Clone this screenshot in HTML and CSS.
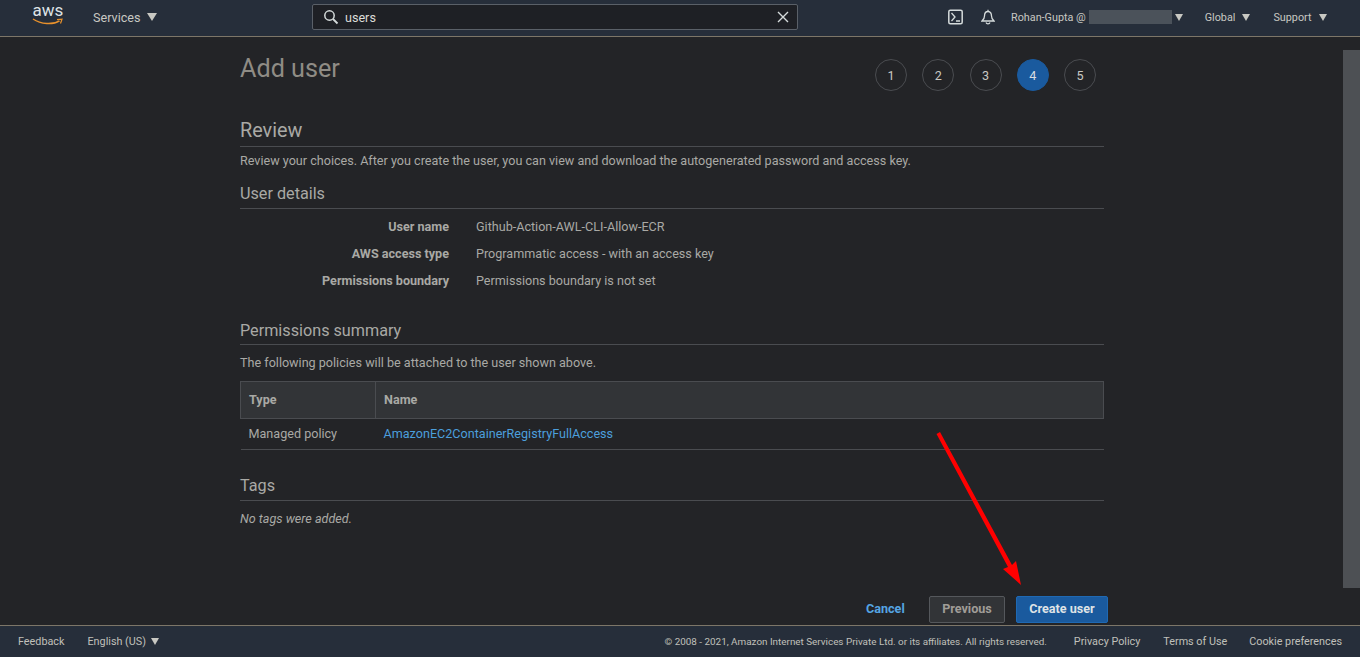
FILE: index.html
```html
<!DOCTYPE html>
<html lang="en">
<head>
<meta charset="utf-8">
<title>Add user</title>
<link rel="stylesheet" href="styles.css">
</head>
<body>
<header class="topbar">
  <div class="logo">
    <span class="logo-text">aws</span>
    <svg class="smile" width="32" height="8" viewBox="0 0 32 8"><path d="M1 1C9 6.500 21 7 27.500 2.800" fill="none" stroke="#e8912c" stroke-width="1.500"/><path d="M25 1.700L30 1.200L28.500 5.500" fill="none" stroke="#e8912c" stroke-width="1.200"/></svg>
  </div>
  <span class="nav services">Services <i class="caret caret-lg"></i></span>
  <div class="search">
    <svg width="16" height="16" viewBox="0 0 16 16" class="search-icon"><circle cx="6.500" cy="6.500" r="4.700" fill="none" stroke="#d5dbdb" stroke-width="1.500"/><path d="M10 10L14.500 14.500" stroke="#d5dbdb" stroke-width="1.800"/></svg>
    <span class="search-text">users</span>
    <svg width="14" height="14" viewBox="0 0 14 14" class="search-x"><path d="M2 2L12 12M12 2L2 12" stroke="#d5dbdb" stroke-width="1.400"/></svg>
  </div>
  <div class="top-right">
    <svg class="ico-term" width="15" height="16" viewBox="0 0 15 16"><rect x="0.800" y="1.300" width="13.400" height="13.400" rx="1.500" fill="none" stroke="#d5dbdb" stroke-width="1.500"/><path d="M3.500 4L7 8L3.500 12M8 12H12" fill="none" stroke="#d5dbdb" stroke-width="1.300"/></svg>
    <svg class="ico-bell" width="14" height="16" viewBox="0 0 14 16"><path d="M7 2.500C4.300 2.500 3.500 4.500 3.500 7C3.500 9.500 2.800 10.500 1 12H13C11.200 10.500 10.500 9.500 10.500 7C10.500 4.500 9.700 2.500 7 2.500ZM7 0.800V2.500" fill="none" stroke="#d5dbdb" stroke-width="1.300"/><path d="M5 13.500C5.500 15.300 8.500 15.300 9 13.500" fill="none" stroke="#d5dbdb" stroke-width="1.200"/></svg>
    <span class="nav small account">Rohan-Gupta @<span class="redact"></span><i class="caret"></i></span>
    <span class="nav small global">Global <i class="caret"></i></span>
    <span class="nav small support">Support <i class="caret"></i></span>
  </div>
</header>

<div class="body-row">
  <main class="content">
    <div class="column">
      <div class="title-row">
        <h1>Add user</h1>
        <ol class="steps">
          <li>1</li><li>2</li><li>3</li><li class="active">4</li><li>5</li>
        </ol>
      </div>
      <h2 class="review">Review</h2>
      <p class="lead">Review your choices. After you create the user, you can view and download the autogenerated password and access key.</p>
      <h3 class="details">User details</h3>
      <dl class="details-list">
        <div><dt>User name</dt><dd>Github-Action-AWL-CLI-Allow-ECR</dd></div>
        <div><dt>AWS access type</dt><dd>Programmatic access - with an access key</dd></div>
        <div><dt>Permissions boundary</dt><dd>Permissions boundary is not set</dd></div>
      </dl>
      <h3 class="perm">Permissions summary</h3>
      <p class="lead">The following policies will be attached to the user shown above.</p>
      <table class="policy">
        <thead><tr><th class="col-type">Type</th><th>Name</th></tr></thead>
        <tbody><tr><td>Managed policy</td><td><a href="#">AmazonEC2ContainerRegistryFullAccess</a></td></tr></tbody>
      </table>
      <h3 class="tags">Tags</h3>
      <p class="lead none">No tags were added.</p>
    </div>
  </main>
  <div class="scroll"><div class="thumb"></div></div>
</div>

<div class="actions">
  <a href="#" class="cancel">Cancel</a>
  <button class="btn prev">Previous</button>
  <button class="btn create">Create user</button>
</div>

<footer class="footer">
  <span class="f-feedback">Feedback</span>
  <span class="f-lang">English (US) <i class="caret"></i></span>
  <span class="copy">© 2008 - 2021, Amazon Internet Services Private Ltd. or its affiliates. All rights reserved.</span>
  <span class="f-link">Privacy Policy</span>
  <span class="f-link terms">Terms of Use</span>
  <span class="f-link">Cookie preferences</span>
</footer>

<svg class="arrow" width="100" height="170" viewBox="0 0 100 170"><path d="M0.500 2L4 0L76 133L80 129L85 153L67 137L72 135Z" fill="#ff0000"/></svg>
</body>
</html>
```
FILE: styles.css
```css
* { box-sizing: border-box; }
html, body { height: 100%; }
body {
  margin: 0;
  height: 657px;
  overflow: hidden;
  display: flex;
  flex-direction: column;
  background: #232427;
  color: #a9a9a5;
  font-family: Roboto, "Liberation Sans", sans-serif;
  font-size: 12.6px;
  position: relative;
}
.topbar {
  height: 37px;
  flex: none;
  background: #262e3a;
  border-bottom: 1px solid #7d7668;
  display: flex;
  align-items: center;
  padding: 0 0 2px 32px;
  color: #c8c8c2;
}
.logo { flex: none; width: 32px; display: flex; flex-direction: column; align-items: center; }
.logo-text { font-size: 17px; line-height: 13px; height: 13px; color: #dfe3e6; margin-top: -4px; }
.smile { display: block; margin-top: 1px; }
.nav { display: inline-flex; align-items: center; white-space: nowrap; }
.services { margin-left: 29px; font-size: 12.6px; gap: 7px; width: 219px; }
.caret {
  display: inline-block;
  width: 0; height: 0;
  border-left: 4.500px solid transparent;
  border-right: 4.500px solid transparent;
  border-top: 7px solid #c8c8c2;
}
.caret-lg { border-left-width: 5px; border-right-width: 5px; border-top-width: 8px; }
.search {
  width: 486px;
  height: 26px;
  background: #1e2025;
  border: 1px solid #5a6068;
  border-radius: 2px;
  display: flex;
  align-items: center;
  padding: 0 7px 0 10px;
  color: #dcdcd8;
  font-size: 12.6px;
}
.search-icon { flex: none; }
.search-text { margin-left: 6px; flex: 1; }
.search-x { flex: none; }
.top-right { display: flex; align-items: center; margin-left: 150px; }
.small { font-size: 10.8px; }
.ico-term { flex: none; }
.ico-bell { flex: none; margin-left: 18px; }
.account { margin-left: 16px; }
.redact { display: inline-block; width: 83px; height: 14px; margin-left: 3px; background: #4b525a; }
.account .caret { margin-left: 3px; border-left-width: 4px; border-right-width: 4px; }
.global { margin-left: 22px; gap: 7px; }
.support { margin-left: 23px; gap: 7px; }

.body-row { flex: 1; min-height: 0; display: flex; }
.content { flex: 1; min-width: 0; padding-left: 240px; }
.column { width: 864px; }
.scroll { width: 17px; flex: none; padding-top: 13px; }
.thumb { height: 100%; background: #4d5054; }

.title-row { display: flex; justify-content: space-between; height: 75px; padding-top: 16px; }
h1 { margin: 1px 0 0; font-size: 25.2px; font-weight: 400; color: #8f8c85; line-height: 30px; }
.steps { list-style: none; display: flex; gap: 15.25px; margin: 6px 8px 0 0; padding: 0; }
.steps li {
  width: 32px; height: 32px;
  border: 1px solid #4a4c50;
  border-radius: 50%;
  display: flex; align-items: center; justify-content: center;
  color: #c8c8c2;
  font-size: 12.6px;
}
.steps li.active { background: #1a5a9e; border-color: #1a5a9e; color: #d8dde2; }
h2, h3 { margin: 0; font-weight: 400; color: #a9a9a5; border-bottom: 1px solid #4a4c50; }
.review { font-size: 19.8px; line-height: 24px; height: 35px; padding-top: 7px; }
.lead { margin: 0; line-height: 16px; color: #a9a9a5; }
.review + .lead { margin-top: 6px; }
.details { font-size: 16.2px; line-height: 20px; height: 28px; margin-top: 12px; padding-top: 3px; }
.details-list { margin: 4px 0 0; }
.details-list div { display: flex; height: 27px; align-items: center; }
dt { width: 209px; text-align: right; font-weight: 700; color: #a9a9a5; }
dd { margin: 0 0 0 27px; }
.perm { font-size: 16.2px; line-height: 20px; height: 28px; margin-top: 23px; padding-top: 4px; }
.perm + .lead { margin-top: 10px; }
.policy { width: 864px; border-collapse: collapse; margin-top: 10px; table-layout: fixed; }
.policy th {
  height: 37px;
  background: #323437;
  border: 1px solid #4a4c50;
  text-align: left;
  padding: 0 8px 2px;
  font-weight: 700;
  color: #a9a9a5;
}
.col-type { width: 135px; }
.policy td { height: 31px; border-bottom: 1px solid #4a4c50; padding: 0 8px 2px; }
.policy a { color: #4c9fdc; text-decoration: none; }
.tags { font-size: 16.2px; line-height: 20px; height: 28px; margin-top: 23px; padding-top: 3px; }
.none { margin-top: 10px; font-style: italic; }

.actions {
  flex: none;
  height: 37px;
  display: flex;
  align-items: center;
  padding: 6px 252px 0 866px;
  background: #232427;
}
.cancel { color: #55a5e3; font-weight: 700; text-decoration: none; font-size: 12.6px; width: 63px; padding-bottom: 2px; }
.btn { height: 27px; border-radius: 2px; font: 700 12.6px Roboto, sans-serif; padding: 0 0 2px; }
.prev { width: 76px; background: #323437; border: 1px solid #55585c; color: #a09d97; margin-right: 11px; }
.create { width: 92px; background: #1a5a9e; border: 1px solid #1f69b3; color: #dfe3e6; }

.footer {
  flex: none;
  height: 32px;
  background: #262e3a;
  border-top: 1px solid #7d7668;
  display: flex;
  align-items: center;
  padding: 0 18px;
  font-size: 10.8px;
  color: #c0c0bb;
}
.f-lang { margin-left: 23px; display: inline-flex; align-items: center; gap: 5px; }
.copy { margin-left: auto; font-size: 9.9px; margin-right: 27px; }
.f-link { margin-left: 22px; }
.copy + .f-link { margin-left: 0; }
.f-link.terms { margin-left: 23px; }

.arrow { position: absolute; left: 936px; top: 432px; }
```
